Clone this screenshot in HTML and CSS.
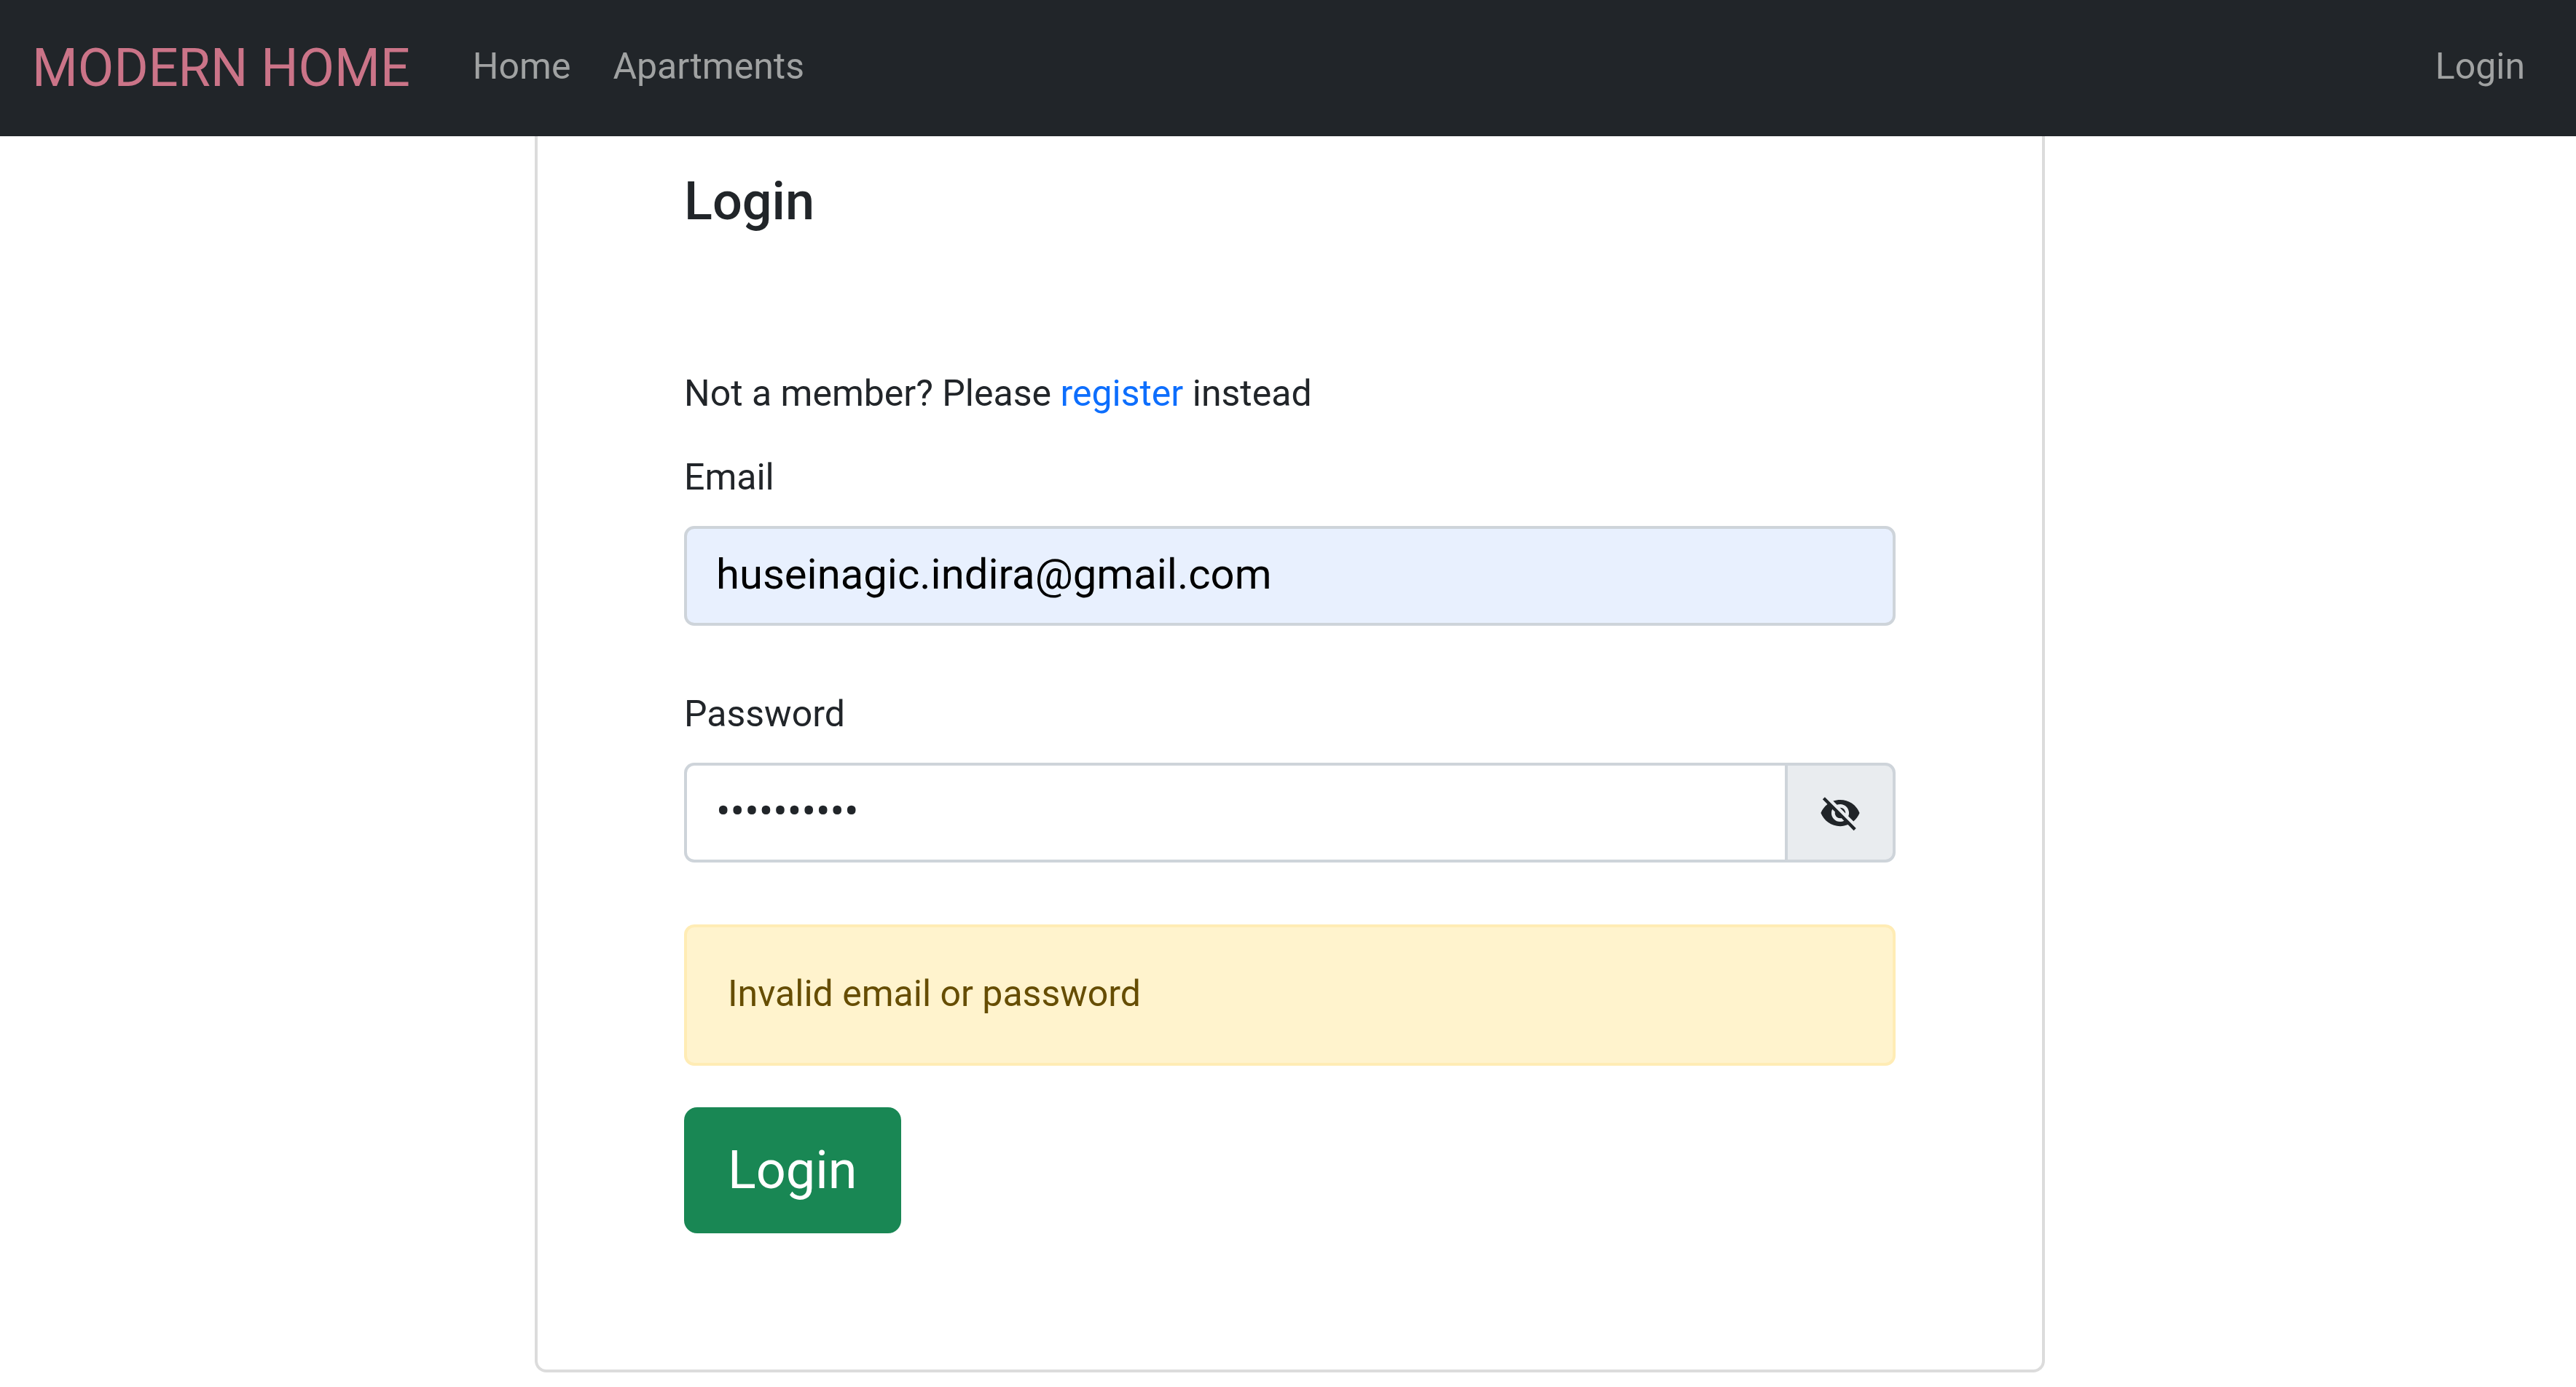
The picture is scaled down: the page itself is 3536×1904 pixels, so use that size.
FILE: index.html
```html
<!DOCTYPE html>
<html lang="en">
<head>
<meta charset="utf-8">
<title>Modern Home - Login</title>
<link rel="stylesheet" href="styles.css">
</head>
<body>
<nav class="navbar">
  <a class="brand" href="#">MODERN HOME</a>
  <div class="nav-links">
    <a class="nav-link" href="#">Home</a>
    <a class="nav-link" href="#">Apartments</a>
  </div>
  <div class="nav-links nav-end">
    <a class="nav-link" href="#">Login</a>
  </div>
</nav>
<main class="page">
  <section class="card">
    <h1 class="title">Login</h1>
    <p class="hint">Not a member? Please <a class="link" href="#">register</a> instead</p>
    <form class="form">
      <div class="field">
        <label class="label" for="email">Email</label>
        <input class="control autofilled" id="email" type="email" value="huseinagic.indira@gmail.com">
      </div>
      <div class="field">
        <label class="label" for="password">Password</label>
        <div class="input-group">
          <input class="control" id="password" type="password" value="modernhome">
          <button class="toggle" type="button" aria-label="Show password">
            <svg class="icon" viewBox="0 0 24 24" aria-hidden="true"><path d="M12 7c2.76 0 5 2.24 5 5 0 .65-.13 1.26-.36 1.83l2.92 2.92c1.51-1.26 2.7-2.89 3.43-4.75-1.73-4.39-6-7.5-11-7.5-1.4 0-2.74.25-3.98.7l2.16 2.16C10.74 7.13 11.35 7 12 7zM2 4.27l2.28 2.28.46.46C3.08 8.3 1.78 10.02 1 12c1.73 4.39 6 7.5 11 7.5 1.55 0 3.03-.3 4.38-.84l.42.42L19.73 22 21 20.73 3.27 3 2 4.27zM7.53 9.8l1.55 1.55c-.05.21-.08.43-.08.65 0 1.66 1.34 3 3 3 .22 0 .44-.03.65-.08l1.55 1.55c-.67.33-1.41.53-2.2.53-2.76 0-5-2.24-5-5 0-.79.2-1.53.53-2.2zm4.31-.78l3.15 3.15.02-.16c0-1.66-1.34-3-3-3l-.17.01z"/></svg>
          </button>
        </div>
      </div>
      <div class="alert" role="alert">Invalid email or password</div>
      <button class="submit" type="submit">Login</button>
    </form>
  </section>
</main>
</body>
</html>
```
FILE: styles.css
```css
* {
  box-sizing: border-box;
}

body {
  margin: 0;
  background: #fff;
  color: #212529;
  font-family: Roboto, "Liberation Sans", sans-serif;
  font-size: 50px;
  line-height: 72px;
}

a {
  text-decoration: none;
}

.navbar {
  display: flex;
  align-items: center;
  padding: 40px 70px 39px 44px;
  background: #212529;
}

.brand {
  color: #cb7488;
  font-size: 72px;
  line-height: 108px;
}

.nav-links {
  display: flex;
  gap: 58px;
  margin-left: 86px;
  padding-bottom: 6px;
}

.nav-end {
  margin-left: auto;
}

.nav-link {
  color: #a0a2a2;
}

.page {
  display: grid;
  grid-template-columns: 734fr 2073fr 729fr;
  padding-bottom: 16px;
}

.card {
  grid-column: 2;
  padding: 47px 201px 187px;
  border: 4px solid #dcdcdc;
  border-top: 0;
  border-radius: 0 0 16px 16px;
}

.title {
  margin: 0 0 184px;
  font-size: 72px;
  font-weight: 500;
  line-height: 86px;
}

.hint {
  margin: 0 0 43px;
}

.link {
  color: #0d6efd;
}

.form {
  display: flex;
  flex-direction: column;
}

.field {
  display: flex;
  flex-direction: column;
  gap: 31px;
  margin-bottom: 85px;
}

.control {
  flex: 1;
  width: 100%;
  min-width: 0;
  height: 137px;
  padding: 0 40px 5px;
  border: 4px solid #ced4da;
  border-radius: 14px;
  background: #fff;
  color: #212529;
  font-family: inherit;
  font-size: 58px;
  line-height: 86px;
}

.autofilled {
  flex: none;
  background: #e8f0fe;
  color: #000;
}

.input-group {
  display: flex;
}

.input-group .control {
  border-right: 0;
  border-radius: 14px 0 0 14px;
}

.toggle {
  display: flex;
  align-items: center;
  padding: 0 43px;
  border: 4px solid #ced4da;
  border-radius: 0 14px 14px 0;
  background: #e9ecef;
  color: #212529;
}

.icon {
  width: 58px;
  height: 58px;
  fill: currentColor;
}

.alert {
  margin-bottom: 57px;
  padding: 55px 56px 59px;
  border: 4px solid #ffecb5;
  border-radius: 14px;
  background: #fff3cd;
  color: #664d03;
}

.submit {
  align-self: flex-start;
  padding: 32px 60px;
  border: 0;
  border-radius: 18px;
  background: #198754;
  color: #fff;
  font-family: inherit;
  font-size: 72px;
  line-height: 109px;
}
```
